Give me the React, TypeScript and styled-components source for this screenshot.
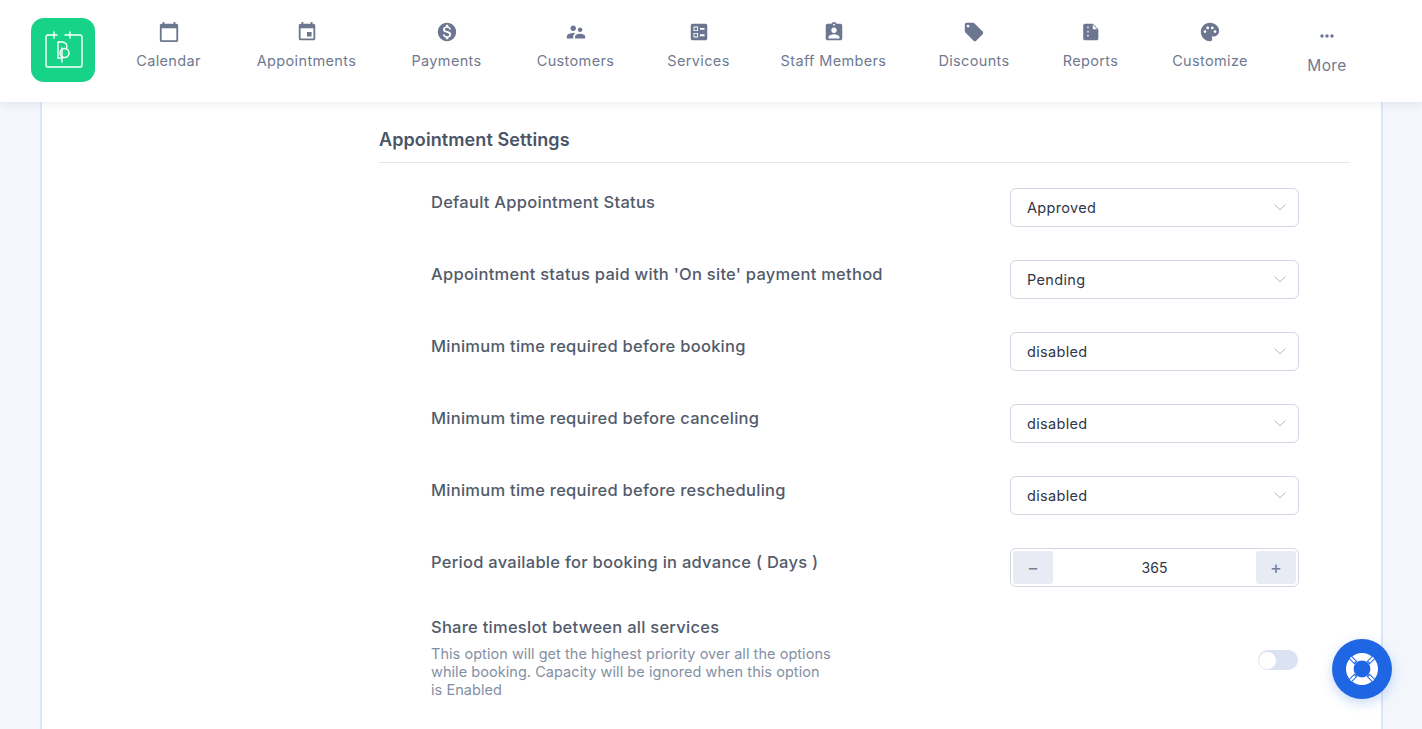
import * as React from "react";
import styled, { createGlobalStyle } from "styled-components";
import {
  MdCalendarToday,
  MdEvent,
  MdMonetizationOn,
  MdSupervisorAccount,
  MdBallot,
  MdAssignmentInd,
  MdLocalOffer,
  MdPalette,
  MdMoreHoriz,
} from "react-icons/md";

const ReportIcon = ({ size }: { size: number }) => (
  <svg width={size} height={size} viewBox="0 0 24 24" fill="currentColor">
    <path d="M5.5 3H14l6 6v10a2 2 0 0 1-2 2H5.5a2 2 0 0 1-2-2V5a2 2 0 0 1 2-2z" />
    <path d="M14 4.2V9h4.8z" fill="#fff" />
    <path d="M8 6h1.4v2H8zM8 10.5h1.4v2H8zM8 15h1.4v2H8z" fill="#fff" />
  </svg>
);

const navItems = [
  { label: "Calendar", icon: MdCalendarToday, width: 121 },
  { label: "Appointments", icon: MdEvent, width: 155 },
  { label: "Payments", icon: MdMonetizationOn, width: 125 },
  { label: "Customers", icon: MdSupervisorAccount, width: 133 },
  { label: "Services", icon: MdBallot, width: 113 },
  { label: "Staff Members", icon: MdAssignmentInd, width: 157 },
  { label: "Discounts", icon: MdLocalOffer, width: 124 },
  { label: "Reports", icon: ReportIcon, width: 109 },
  { label: "Customize", icon: MdPalette, width: 130 },
];

const selectRows = [
  { label: "Default Appointment Status", value: "Approved" },
  { label: "Appointment status paid with 'On site' payment method", value: "Pending" },
  { label: "Minimum time required before booking", value: "disabled" },
  { label: "Minimum time required before canceling", value: "disabled" },
  { label: "Minimum time required before rescheduling", value: "disabled" },
];

const Logo = () => (
  <LogoBox>
    <svg width="64" height="64" viewBox="0 0 64 64" fill="none" stroke="#fff" strokeWidth="1.4" strokeLinecap="round" strokeLinejoin="round">
      <path d="M26 17h-9a2 2 0 0 0-2 2v28a2 2 0 0 0 2 2h32a2 2 0 0 0 2-2V19a2 2 0 0 0-2-2H34" />
      <path d="M23 14v6M39 14v6" />
      <path d="M27 40V24h4.500a4.500 4.500 0 0 1 4 6.500" />
      <circle cx="33.500" cy="35" r="4.500" />
      <path d="M31 30v14M27 40h4" />
    </svg>
  </LogoBox>
);

const LifeRing = () => (
  <svg width="34" height="34" viewBox="0 0 34 34" fill="none" strokeLinecap="butt">
    <circle cx="17" cy="17" r="12.200" stroke="#fff" strokeWidth="7.600" />
    <path d="M11 11 4.500 4.500M23 11l6.500-6.500M11 23l-6.500 6.500M23 23l6.500 6.500" stroke="#1f66e5" strokeWidth="4.200" />
    <path d="M10 10 5.500 5.500M24 10l4.500-4.500M10 24l-4.500 4.500M24 24l4.500 4.500" stroke="#fff" strokeWidth="2.200" />
  </svg>
);

export default function App() {
  return (
    <>
      <GlobalStyle />
      <Header>
        <Logo />
        <Nav>
          {navItems.map(({ label, icon: Icon, width }) => (
            <NavItem key={label} $width={width}>
              <Icon size={22} />
              <NavLabel>{label}</NavLabel>
            </NavItem>
          ))}
          <MoreItem>
            <MdMoreHoriz size={20} />
            <MoreLabel>More</MoreLabel>
          </MoreItem>
        </Nav>
      </Header>
      <Main>
        <Card>
          <Section>
            <SectionTitle>Appointment Settings</SectionTitle>
            <Rows>
              {selectRows.map((row) => (
                <Row key={row.label}>
                  <RowLabel>{row.label}</RowLabel>
                  <SelectBox>
                    {row.value}
                    <svg width="12" height="7" viewBox="0 0 12 7" fill="none" stroke="#b4bac7" strokeWidth="1">
                      <path d="M.7.7 6 6l5.300-5.300" />
                    </svg>
                  </SelectBox>
                </Row>
              ))}
              <Row>
                <RowLabel>Period available for booking in advance ( Days )</RowLabel>
                <Stepper>
                  <StepButton>−</StepButton>
                  <StepValue>365</StepValue>
                  <StepButton>+</StepButton>
                </Stepper>
              </Row>
              <ShareRow>
                <div>
                  <RowLabel>Share timeslot between all services</RowLabel>
                  <RowHint>
                    This option will get the highest priority over all the options
                    <br />
                    while booking. Capacity will be ignored when this option
                    <br />
                    is Enabled
                  </RowHint>
                </div>
                <Toggle>
                  <ToggleKnob />
                </Toggle>
              </ShareRow>
            </Rows>
          </Section>
        </Card>
      </Main>
      <HelpButton>
        <LifeRing />
      </HelpButton>
    </>
  );
}

const GlobalStyle = createGlobalStyle`
  html, body {
    margin: 0;
    height: 100%;
    overflow: hidden;
    background: #f3f7fc;
    font-family: Inter, "Noto Sans", sans-serif;
  }
`;

const Header = styled.header`
  position: relative;
  z-index: 2;
  display: flex;
  align-items: flex-start;
  height: 102px;
  padding: 18px 0 0 31px;
  box-sizing: border-box;
  background: #fff;
  box-shadow: 0 2px 8px rgba(90, 105, 135, 0.12);
`;

const LogoBox = styled.div`
  display: flex;
  flex: none;
  width: 64px;
  height: 64px;
  border-radius: 13px;
  background: #17d388;
`;

const Nav = styled.nav`
  display: flex;
  margin-left: 13px;
`;

const NavItem = styled.div<{ $width: number }>`
  display: flex;
  flex-direction: column;
  align-items: center;
  width: ${(p) => p.$width}px;
  padding-top: 3px;
  color: #6c7690;
`;

const NavLabel = styled.span`
  margin-top: 7px;
  font-size: 14.5px;
  line-height: 22px;
  font-weight: 400;
  letter-spacing: 0.35px;
  color: #6f7a90;
  white-space: nowrap;
`;

const MoreItem = styled(NavItem).attrs({ $width: 104 })`
  padding-top: 8px;
`;

const MoreLabel = styled(NavLabel)`
  margin-top: 9px;
  font-size: 15.5px;
`;

const Main = styled.main`
  padding-left: 40px;
`;

const Card = styled.div`
  width: 1343px;
  height: 627px;
  box-sizing: border-box;
  padding: 24px 31px 0 337px;
  background: #fff;
  border-left: 2px solid #dbe6f6;
  border-right: 2px solid #dbe6f6;
`;

const Section = styled.section`
  display: flex;
  flex-direction: column;
`;

const SectionTitle = styled.h2`
  margin: 0;
  padding: 0 0 8px;
  font-size: 18px;
  line-height: 28px;
  font-weight: 600;
  letter-spacing: 0.1px;
  color: #4a5567;
  border-bottom: 1px solid #e3e6ef;
`;

const Rows = styled.div`
  display: flex;
  flex-direction: column;
  gap: 33px;
  padding: 25px 51px 0 52px;
`;

const Row = styled.div`
  display: flex;
  justify-content: space-between;
  align-items: flex-start;
`;

const ShareRow = styled(Row)`
  margin-top: -7px;
`;

const RowLabel = styled.div`
  font-size: 16.5px;
  line-height: 28px;
  font-weight: 500;
  letter-spacing: 0.26px;
  color: #525b6c;
`;

const RowHint = styled.p`
  margin: 4px 0 0;
  font-size: 14.5px;
  line-height: 18px;
  letter-spacing: 0.05px;
  color: #848fa3;
`;

const SelectBox = styled.div`
  display: flex;
  align-items: center;
  justify-content: space-between;
  width: 289px;
  height: 39px;
  box-sizing: border-box;
  padding: 0 12px 1px 16px;
  font-size: 14.5px;
  letter-spacing: 0.33px;
  color: #2f3747;
  background: #fff;
  border: 1px solid #d2d7e3;
  border-radius: 6px;
`;

const Stepper = styled.div`
  display: flex;
  justify-content: space-between;
  align-items: center;
  width: 289px;
  height: 39px;
  box-sizing: border-box;
  padding: 0 2px;
  background: #fff;
  border: 1px solid #d2d7e3;
  border-radius: 6px;
`;

const StepButton = styled.div`
  display: flex;
  align-items: center;
  justify-content: center;
  width: 40px;
  height: 33px;
  font-size: 18px;
  color: #737d93;
  background: #e8ebf3;
  border-radius: 3px;
`;

const StepValue = styled.span`
  padding-bottom: 1px;
  font-size: 14px;
  color: #2f3747;
`;

const Toggle = styled.div`
  display: flex;
  align-items: center;
  width: 40px;
  height: 20px;
  margin: 37px 1px 0 0;
  box-sizing: border-box;
  padding-left: 1px;
  background: #dbe3f2;
  border-radius: 10px;
`;

const ToggleKnob = styled.span`
  width: 17px;
  height: 17px;
  background: #fff;
  border-radius: 50%;
`;

const HelpButton = styled.div`
  position: fixed;
  left: 1332px;
  top: 639px;
  z-index: 3;
  display: flex;
  align-items: center;
  justify-content: center;
  width: 60px;
  height: 60px;
  background: #1f66e5;
  border-radius: 50%;
  box-shadow: 0 4px 12px rgba(31, 102, 229, 0.25);
`;
